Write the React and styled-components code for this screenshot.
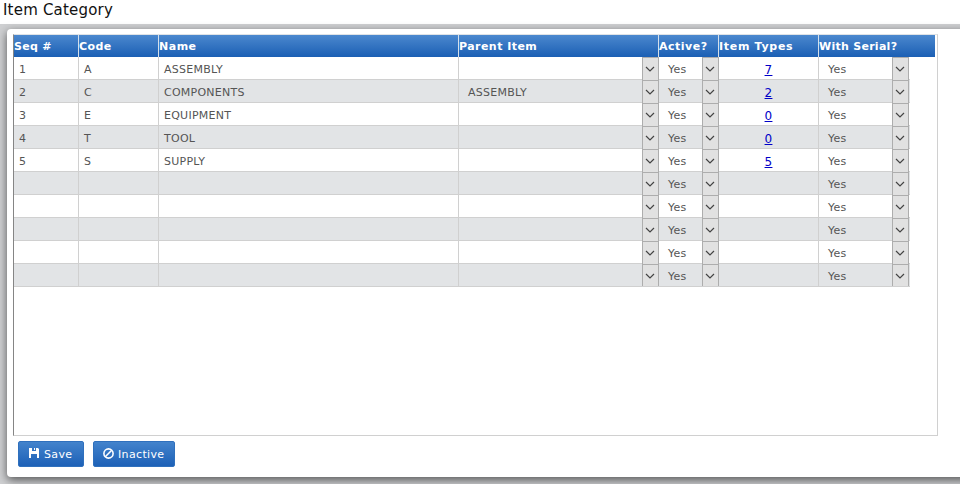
import React from "react";
import styled, { createGlobalStyle } from "styled-components";

const GlobalStyle = createGlobalStyle`
  * { box-sizing: border-box; }
  body {
    margin: 0;
    background: #cfd0d2;
    font-family: Verdana, "DejaVu Sans", sans-serif;
    font-size: 11px;
    overflow: hidden;
  }
`;

const Page = styled.div`
  height: 484px;
  overflow: hidden;
  background: #cfd0d2;
`;

const Title = styled.h1`
  margin: 0;
  height: 24px;
  padding-left: 3px;
  background: #fff;
  color: #111;
  font-size: 15px;
  font-weight: 400;
  line-height: 20px;
  letter-spacing: 0.2px;
`;

const Panel = styled.main`
  margin: 5px -20px 0 7px;
  height: 448px;
  padding: 5px 0 0 6px;
  border-radius: 4px;
  background: #fff;
  box-shadow: 0 3px 10px rgba(0, 0, 0, 0.6);
`;

const GridFrame = styled.section`
  width: 925px;
  height: 402px;
  border: 1px solid #d0d0d0;
  border-top-color: #dfe3e6;
  border-left-color: #858585;
`;

const columns = "65px 80px 300px 200px 60px 100px";

const HeaderRow = styled.div`
  display: grid;
  grid-template-columns: ${columns} 116px;
  width: 921px;
  height: 22px;
  background: linear-gradient(#4b88ce, #1b5fb4);
`;

const HeaderCell = styled.div`
  border-right: 1px solid #d4dfeb;
  color: #fff;
  font-weight: 700;
  line-height: 24px;
  white-space: nowrap;
  letter-spacing: ${(p) => p.$spacing}px;
  &:last-child { border-right: 0; }
`;

const Row = styled.div`
  display: grid;
  grid-template-columns: ${columns} 91px;
  grid-template-rows: 23px;
  width: 896px;
  height: 23px;
  background: ${(p) => (p.$shaded ? "#e2e4e6" : "#fff")};
`;

const Cell = styled.div`
  display: flex;
  justify-content: ${(p) => (p.$center ? "center" : "space-between")};
  min-width: 0;
  height: 23px;
  padding-left: ${(p) => (p.$select ? 9 : p.$center ? 0 : 5)}px;
  border-right: 1px solid #d0d0d0;
  border-bottom: 1px solid #d0d0d0;
  color: #555;
  line-height: 25px;
  letter-spacing: 0.25px;
  white-space: nowrap;
  &:last-child { border-right: 0; padding-right: 1px; }
`;

const Arrow = styled.span`
  display: flex;
  align-items: center;
  justify-content: center;
  flex: none;
  width: 17px;
  height: 23px;
  padding-right: 1px;
  margin-right: -1px;
  border: 1px solid #adadad;
  border-bottom: 0;
  background: #e1e1e1;
  ${Cell}:last-child & { margin-right: 0; }
  ${Row}:last-child & { height: 22px; }
`;

const CountLink = styled.a`
  color: #0000c8;
  font-size: 12px;
  line-height: 26px;
  text-decoration: underline;
  text-underline-offset: 1px;
`;

const Actions = styled.div`
  display: flex;
  gap: 9px;
  padding: 5px 0 0 5px;
`;

const Button = styled.button`
  display: flex;
  align-items: center;
  justify-content: flex-start;
  gap: 4px;
  width: ${(p) => p.$width}px;
  height: 26px;
  padding: 0 0 0 9px;
  border: 1px solid #2f70bd;
  border-radius: 2px;
  background: linear-gradient(#4383cc, #1d61b7);
  color: #fff;
  font: inherit;
  letter-spacing: 0.35px;
`;

const SaveIcon = () => (
  <svg width="12" height="12" viewBox="0 0 12 12">
    <path fill="#fff" fillRule="evenodd" d="M1 0h9l1 1v9H9V6H3v4H1zM4 0v3h4V0z" />
    <path fill="#fff" d="M6 0h1v2H6z" />
  </svg>
);

const BanIcon = () => (
  <svg width="11" height="12" viewBox="0 0 11 12" fill="none" stroke="#fff" strokeWidth="1.6">
    <circle cx="5.5" cy="5.5" r="4.6" />
    <path d="M2.3 8.7 8.7 2.3" />
  </svg>
);

const SelectCell = ({ value }) => (
  <Cell $select>
    <span>{value}</span>
    <Arrow>
      <svg width="10" height="6" viewBox="0 0 10 6" fill="none" stroke="#444" strokeWidth="1.2">
        <path d="M1 1l4 4 4-4" />
      </svg>
    </Arrow>
  </Cell>
);

const headers = [
  { label: "Seq #", spacing: 0.3 },
  { label: "Code", spacing: 0.4 },
  { label: "Name", spacing: 0.5 },
  { label: "Parent Item", spacing: 0.45 },
  { label: "Active?", spacing: 0.5 },
  { label: "Item Types", spacing: 0.7 },
  { label: "With Serial?", spacing: 0.28 },
];

const items = [
  { seq: 1, code: "A", name: "ASSEMBLY", types: 7 },
  { seq: 2, code: "C", name: "COMPONENTS", parent: "ASSEMBLY", types: 2 },
  { seq: 3, code: "E", name: "EQUIPMENT", types: 0 },
  { seq: 4, code: "T", name: "TOOL", types: 0 },
  { seq: 5, code: "S", name: "SUPPLY", types: 5 },
  {}, {}, {}, {}, {},
];

export default function App() {
  return (
    <Page>
      <GlobalStyle />
      <Title>Item Category</Title>
      <Panel>
        <GridFrame>
          <HeaderRow>
            {headers.map((h) => (
              <HeaderCell key={h.label} $spacing={h.spacing}>{h.label}</HeaderCell>
            ))}
          </HeaderRow>
          {items.map((item, i) => (
            <Row key={i} $shaded={i % 2 === 1}>
              <Cell>{item.seq}</Cell>
              <Cell>{item.code}</Cell>
              <Cell>{item.name}</Cell>
              <SelectCell value={item.parent} />
              <SelectCell value="Yes" />
              <Cell $center>
                {item.types !== undefined && <CountLink href="#">{item.types}</CountLink>}
              </Cell>
              <SelectCell value="Yes" />
            </Row>
          ))}
        </GridFrame>
        <Actions>
          <Button $width={66}><SaveIcon />Save</Button>
          <Button $width={82}><BanIcon />Inactive</Button>
        </Actions>
      </Panel>
    </Page>
  );
}
